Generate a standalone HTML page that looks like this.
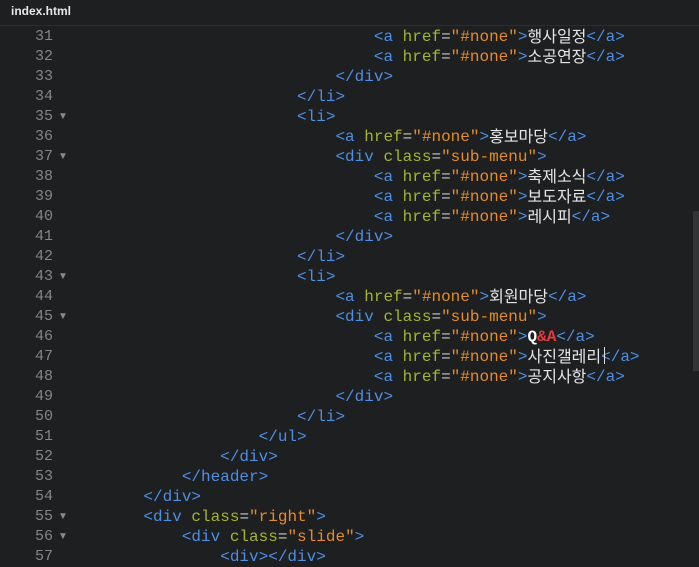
<!DOCTYPE html>
<html><head><meta charset="utf-8"><style>
html,body{margin:0;padding:0;width:699px;height:562px;overflow:hidden;background:#1e1f21;}
.hdr{position:absolute;left:0;top:0;width:699px;height:25px;background:#1e1f21;border-bottom:1px solid #2c2d30;}
.hdr span{position:absolute;left:11px;top:4px;font:bold 12px "Liberation Sans",sans-serif;color:#e8e8e8;}
.ln{position:absolute;left:0;width:53px;text-align:right;font:15px "Liberation Mono",monospace;color:#858585;height:20px;line-height:20px;}
.ar{position:absolute;left:58px;font-size:10px;color:#8a8a8a;height:20px;line-height:20px;}
.code{position:absolute;left:105px;font:16px "Liberation Mono",monospace;white-space:pre;color:#dcdcdc;height:20px;line-height:20px;overflow:visible;}
.t{color:#4d8fe3}.a{color:#a3b52c}.s{color:#e58b2b}.e{color:#c8c8c8}
.k{font-family:"Noto Sans CJK KR",sans-serif;font-size:16px;color:#e6e6e6;line-height:0;display:inline-block;vertical-align:top;position:relative;top:8px;}
.r{color:#e33b3b;font-weight:bold}.w{color:#fff;font-weight:bold}
.sb{position:absolute;left:693px;top:211px;width:6px;height:160px;background:#333436;}
.cur{position:absolute;left:604px;top:347px;width:1px;height:17px;background:#ddd;}
</style></head><body>
<div class="hdr"><span>index.html</span></div>
<div id="c"></div>
<div class="sb"></div>
<div class="cur"></div>
<script>
var A='<span class="t">&lt;a</span> <span class="a">href</span><span class="e">=</span><span class="s">"#none"</span><span class="t">&gt;</span>';
var Z='<span class="t">&lt;/a&gt;</span>';
function a(k){return A+'<span class="k">'+k+'</span>'+Z;}
function sp(n){return ' '.repeat(n);}
function t(x){return '<span class="t">'+x.replace(/</g,'&lt;').replace(/>/g,'&gt;')+'</span>';}
function dv(c){return '<span class="t">&lt;div</span> <span class="a">class</span><span class="e">=</span><span class="s">"'+c+'"</span><span class="t">&gt;</span>';}
var L=[
[31,sp(28)+a('행사일정')],
[32,sp(28)+a('소공연장')],
[33,sp(24)+t('</div>')],
[34,sp(20)+t('</li>')],
[35,sp(20)+t('<li>'),1],
[36,sp(24)+a('홍보마당')],
[37,sp(24)+dv('sub-menu'),1],
[38,sp(28)+a('축제소식')],
[39,sp(28)+a('보도자료')],
[40,sp(28)+a('레시피')],
[41,sp(24)+t('</div>')],
[42,sp(20)+t('</li>')],
[43,sp(20)+t('<li>'),1],
[44,sp(24)+a('회원마당')],
[45,sp(24)+dv('sub-menu'),1],
[46,sp(28)+A+'<span class="w">Q</span><span class="r">&amp;A</span>'+Z],
[47,sp(28)+a('사진갤레리')],
[48,sp(28)+a('공지사항')],
[49,sp(24)+t('</div>')],
[50,sp(20)+t('</li>')],
[51,sp(16)+t('</ul>')],
[52,sp(12)+t('</div>')],
[53,sp(8)+t('</header>')],
[54,sp(4)+t('</div>')],
[55,sp(4)+dv('right'),1],
[56,sp(8)+dv('slide'),1],
[57,sp(12)+t('<div></div>')]
];
var h='';
L.forEach(function(l,i){var y=27+i*20;
h+='<div class="ln" style="top:'+y+'px">'+l[0]+'</div>';
if(l[2])h+='<div class="ar" style="top:'+y+'px">▼</div>';
h+='<div class="code" style="top:'+y+'px">'+l[1]+'</div>';});
document.getElementById('c').innerHTML=h;
</script>
</body></html>
